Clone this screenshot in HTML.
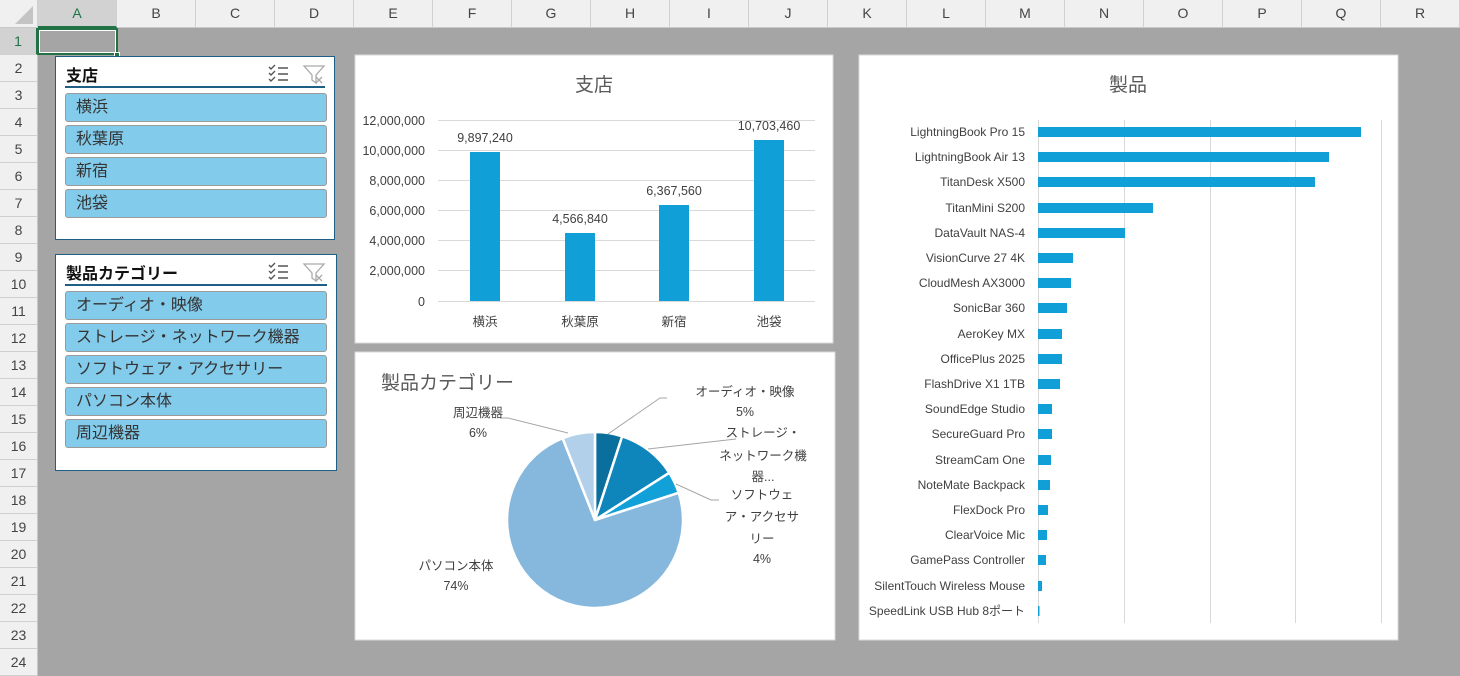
<!DOCTYPE html>
<html><head><meta charset="utf-8"><style>
*{margin:0;padding:0;box-sizing:border-box}
body{width:1460px;height:676px;overflow:hidden;background:#a5a5a5;font-family:"Liberation Sans","Noto Sans CJK JP",sans-serif;position:relative}
.abs{position:absolute}
.ch{position:absolute;top:0;height:28px;background:#f0f0f0;border-right:1px solid #d0d0d0;border-bottom:1px solid #c8c8c8;text-align:center;line-height:26px;font-size:14px;color:#444}
.rh{position:absolute;left:0;width:38px;background:#f0f0f0;border-bottom:1px solid #d0d0d0;border-right:1px solid #c8c8c8;text-align:center;font-size:14px;color:#444}
.sl{position:absolute;background:#fff;border:1px solid #1f5f85}
.sl .t{position:absolute;left:10px;top:5px;font-size:16px;font-weight:bold;color:#111}
.sl .ln{position:absolute;left:9px;right:9px;top:29px;border-top:2px solid #1f5f85}
.it{position:absolute;left:9px;width:262px;height:29px;background:#83cbeb;border:1px solid #9a9a9a;border-radius:3px;font-size:16px;color:#333;padding-left:10px;line-height:27px}
</style></head><body>
<div class="ch" style="left:0;width:38px;background:#f0f0f0"><svg width="38" height="28" style="position:absolute;left:0;top:0"><polygon points="33,6 33,24 15,24" fill="#c4c4c4"/></svg></div>
<div class="ch" style="left:38px;width:79px;background:#d2d2d2;border-bottom:2px solid #217346;color:#217346">A</div>
<div class="ch" style="left:117px;width:79px">B</div>
<div class="ch" style="left:196px;width:79px">C</div>
<div class="ch" style="left:275px;width:79px">D</div>
<div class="ch" style="left:354px;width:79px">E</div>
<div class="ch" style="left:433px;width:79px">F</div>
<div class="ch" style="left:512px;width:79px">G</div>
<div class="ch" style="left:591px;width:79px">H</div>
<div class="ch" style="left:670px;width:79px">I</div>
<div class="ch" style="left:749px;width:79px">J</div>
<div class="ch" style="left:828px;width:79px">K</div>
<div class="ch" style="left:907px;width:79px">L</div>
<div class="ch" style="left:986px;width:79px">M</div>
<div class="ch" style="left:1065px;width:79px">N</div>
<div class="ch" style="left:1144px;width:79px">O</div>
<div class="ch" style="left:1223px;width:79px">P</div>
<div class="ch" style="left:1302px;width:79px">Q</div>
<div class="ch" style="left:1381px;width:79px">R</div>
<div class="rh" style="top:28px;height:27px;line-height:27px;background:#d2d2d2;color:#217346;border-right:2px solid #217346">1</div>
<div class="rh" style="top:55px;height:27px;line-height:27px">2</div>
<div class="rh" style="top:82px;height:27px;line-height:27px">3</div>
<div class="rh" style="top:109px;height:27px;line-height:27px">4</div>
<div class="rh" style="top:136px;height:27px;line-height:27px">5</div>
<div class="rh" style="top:163px;height:27px;line-height:27px">6</div>
<div class="rh" style="top:190px;height:27px;line-height:27px">7</div>
<div class="rh" style="top:217px;height:27px;line-height:27px">8</div>
<div class="rh" style="top:244px;height:27px;line-height:27px">9</div>
<div class="rh" style="top:271px;height:27px;line-height:27px">10</div>
<div class="rh" style="top:298px;height:27px;line-height:27px">11</div>
<div class="rh" style="top:325px;height:27px;line-height:27px">12</div>
<div class="rh" style="top:352px;height:27px;line-height:27px">13</div>
<div class="rh" style="top:379px;height:27px;line-height:27px">14</div>
<div class="rh" style="top:406px;height:27px;line-height:27px">15</div>
<div class="rh" style="top:433px;height:27px;line-height:27px">16</div>
<div class="rh" style="top:460px;height:27px;line-height:27px">17</div>
<div class="rh" style="top:487px;height:27px;line-height:27px">18</div>
<div class="rh" style="top:514px;height:27px;line-height:27px">19</div>
<div class="rh" style="top:541px;height:27px;line-height:27px">20</div>
<div class="rh" style="top:568px;height:27px;line-height:27px">21</div>
<div class="rh" style="top:595px;height:27px;line-height:27px">22</div>
<div class="rh" style="top:622px;height:27px;line-height:27px">23</div>
<div class="rh" style="top:649px;height:27px;line-height:27px">24</div>
<div class="abs" style="left:37px;top:28px;width:81px;height:27px;border:2px solid #217346;outline:1px solid #fff;outline-offset:-3px"></div>
<div class="abs" style="left:114px;top:52px;width:6px;height:6px;background:#217346;border:1px solid #fff"></div>

<div class="sl" style="left:55px;top:56px;width:280px;height:184px">
<div class="t">支店</div>
<svg class="abs" style="left:211px;top:6px" width="60" height="22"><g stroke="#555" stroke-width="1.4" fill="none"><path d="M2 4l2 2 4-4M2 10l2 2 4-4M2 16l2 2 4-4M11 5h10M11 11h10M11 17h10"/></g><path d="M37 3h20l-8 9v8l-4-3v-5z" stroke="#aaa" fill="none" stroke-width="1.3"/><path d="M49 14l6 6M55 14l-6 6" stroke="#aaa" stroke-width="1.3"/></svg>
<div class="ln"></div>
<div class="it" style="top:36px">横浜</div>
<div class="it" style="top:68px">秋葉原</div>
<div class="it" style="top:100px">新宿</div>
<div class="it" style="top:132px">池袋</div>
</div>
<div class="sl" style="left:55px;top:254px;width:282px;height:217px">
<div class="t">製品カテゴリー</div>
<svg class="abs" style="left:211px;top:6px" width="60" height="22"><g stroke="#555" stroke-width="1.4" fill="none"><path d="M2 4l2 2 4-4M2 10l2 2 4-4M2 16l2 2 4-4M11 5h10M11 11h10M11 17h10"/></g><path d="M37 3h20l-8 9v8l-4-3v-5z" stroke="#aaa" fill="none" stroke-width="1.3"/><path d="M49 14l6 6M55 14l-6 6" stroke="#aaa" stroke-width="1.3"/></svg>
<div class="ln"></div>
<div class="it" style="top:36px">オーディオ・映像</div>
<div class="it" style="top:68px">ストレージ・ネットワーク機器</div>
<div class="it" style="top:100px">ソフトウェア・アクセサリー</div>
<div class="it" style="top:132px">パソコン本体</div>
<div class="it" style="top:164px">周辺機器</div>
</div>

<svg class="abs" style="left:0;top:0" width="1460" height="676" font-family="Liberation Sans,Noto Sans CJK JP,sans-serif">
<rect x="355" y="55" width="478" height="288" fill="#fff" stroke="#d9d9d9"/>
<text x="594" y="91" font-size="19" fill="#595959" text-anchor="middle">支店</text>
<g stroke="#d9d9d9"><path d="M438 120.5h377M438 150.5h377M438 180.5h377M438 210.5h377M438 240.5h377M438 270.5h377M438 301.5h377"/></g>
<g font-size="12.5" fill="#404040" text-anchor="end"><text x="425" y="125">12,000,000</text><text x="425" y="155">10,000,000</text><text x="425" y="185">8,000,000</text><text x="425" y="215">6,000,000</text><text x="425" y="245">4,000,000</text><text x="425" y="275">2,000,000</text><text x="425" y="306">0</text></g>
<g fill="#109fd6"><rect x="470" y="152" width="30" height="149"/><rect x="565" y="233" width="30" height="68"/><rect x="659" y="205" width="30" height="96"/><rect x="754" y="140" width="30" height="161"/></g>
<g font-size="12.5" fill="#404040" text-anchor="middle"><text x="485" y="142">9,897,240</text><text x="580" y="223">4,566,840</text><text x="674" y="195">6,367,560</text><text x="769" y="130">10,703,460</text>
<text x="485" y="326">横浜</text><text x="580" y="326">秋葉原</text><text x="674" y="326">新宿</text><text x="769" y="326">池袋</text></g>

<rect x="355" y="352" width="480" height="288" fill="#fff" stroke="#d9d9d9"/>
<text x="381" y="389" font-size="19" fill="#595959">製品カテゴリー</text>
<g stroke="#fff" stroke-width="2.5" stroke-linejoin="round">
<path d="M595 520L595 432A88 88 0 0 1 622.2 436.3Z" fill="#0a6f9c"/>
<path d="M595 520L622.2 436.3A88 88 0 0 1 669.3 472.8Z" fill="#0e86bb"/>
<path d="M595 520L669.3 472.8A88 88 0 0 1 678.7 492.8Z" fill="#11a0d8"/>
<path d="M595 520L678.7 492.8A88 88 0 1 1 562.6 438.2Z" fill="#86b8de"/>
<path d="M595 520L562.6 438.2A88 88 0 0 1 595 432Z" fill="#b3d0ea"/>
</g>
<g stroke="#a6a6a6" fill="none"><path d="M608 434L660 398h7M648 449l88-10M676 484l35 16h8M568 433L508 418h-8"/></g>
<g font-size="12.5" fill="#404040" text-anchor="middle">
<text x="745" y="396">オーディオ・映像</text><text x="745" y="416">5%</text>
<text x="763" y="437">ストレージ・</text><text x="763" y="460">ネットワーク機</text><text x="763" y="481">器...</text>
<text x="762" y="499">ソフトウェ</text><text x="762" y="521">ア・アクセサ</text><text x="762" y="543">リー</text><text x="762" y="563">4%</text>
<text x="478" y="417">周辺機器</text><text x="478" y="437">6%</text>
<text x="456" y="570">パソコン本体</text><text x="456" y="590">74%</text></g>

<rect x="859" y="55" width="539" height="585" fill="#fff" stroke="#d9d9d9"/>
<text x="1128" y="91" font-size="19" fill="#595959" text-anchor="middle">製品</text>
<g stroke="#d9d9d9"><path d="M1038.5 120v503M1124.5 120v503M1210.5 120v503M1295.5 120v503M1381.5 120v503"/></g>
<g fill="#109fd6">
<rect x="1038" y="127" width="323" height="10"/><rect x="1038" y="152" width="291" height="10"/><rect x="1038" y="177" width="277" height="10"/><rect x="1038" y="203" width="115" height="10"/><rect x="1038" y="228" width="87" height="10"/><rect x="1038" y="253" width="35" height="10"/><rect x="1038" y="278" width="33" height="10"/><rect x="1038" y="303" width="29" height="10"/><rect x="1038" y="329" width="24" height="10"/><rect x="1038" y="354" width="24" height="10"/><rect x="1038" y="379" width="22" height="10"/><rect x="1038" y="404" width="14" height="10"/><rect x="1038" y="429" width="14" height="10"/><rect x="1038" y="455" width="13" height="10"/><rect x="1038" y="480" width="12" height="10"/><rect x="1038" y="505" width="10" height="10"/><rect x="1038" y="530" width="9" height="10"/><rect x="1038" y="555" width="8" height="10"/><rect x="1038" y="581" width="4" height="10"/><rect x="1038" y="606" width="1.5" height="10"/>
</g>
<g font-size="12" fill="#404040" text-anchor="end">
<text x="1025" y="136">LightningBook Pro 15</text><text x="1025" y="161">LightningBook Air 13</text><text x="1025" y="186">TitanDesk X500</text><text x="1025" y="212">TitanMini S200</text><text x="1025" y="237">DataVault NAS-4</text><text x="1025" y="262">VisionCurve 27 4K</text><text x="1025" y="287">CloudMesh AX3000</text><text x="1025" y="312">SonicBar 360</text><text x="1025" y="338">AeroKey MX</text><text x="1025" y="363">OfficePlus 2025</text><text x="1025" y="388">FlashDrive X1 1TB</text><text x="1025" y="413">SoundEdge Studio</text><text x="1025" y="438">SecureGuard Pro</text><text x="1025" y="464">StreamCam One</text><text x="1025" y="489">NoteMate Backpack</text><text x="1025" y="514">FlexDock Pro</text><text x="1025" y="539">ClearVoice Mic</text><text x="1025" y="564">GamePass Controller</text><text x="1025" y="590">SilentTouch Wireless Mouse</text><text x="1025" y="615">SpeedLink USB Hub 8ポート</text>
</g>
</svg>
</body></html>
